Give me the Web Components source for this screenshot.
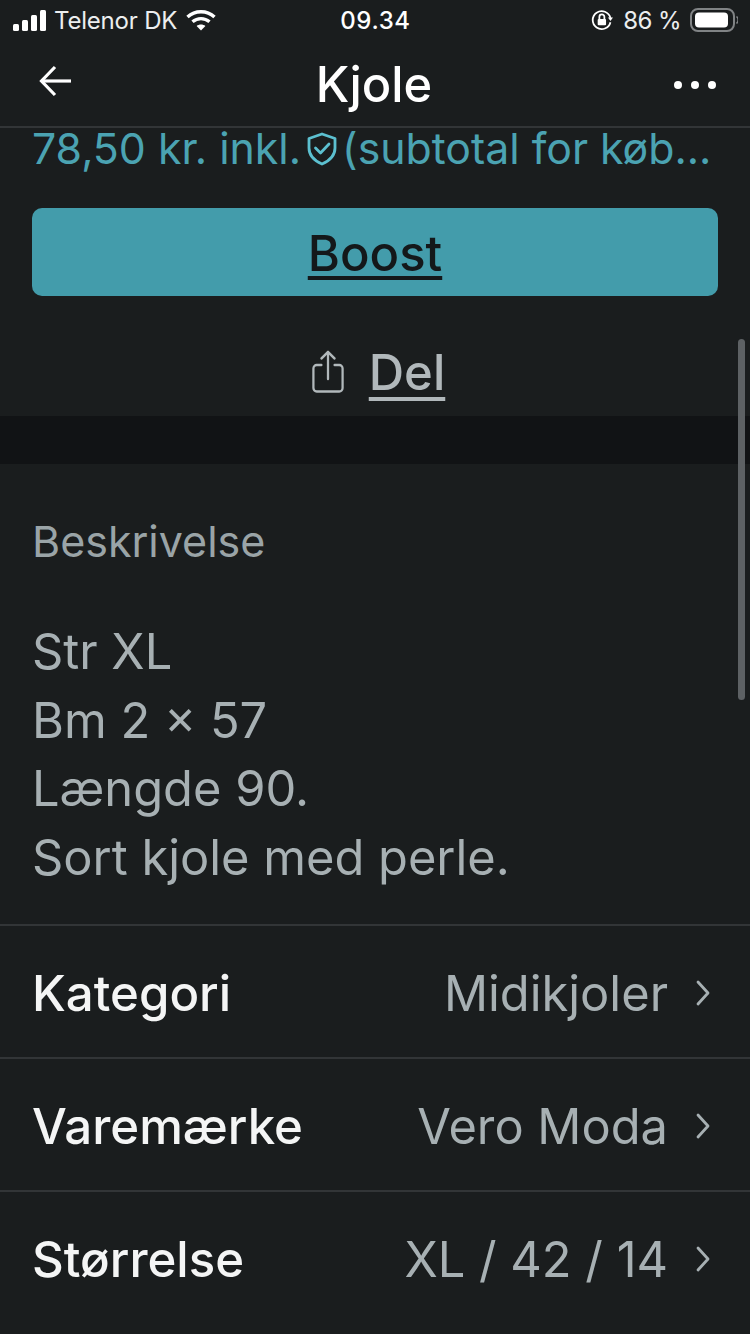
<!DOCTYPE html>
<html lang="da">
<head>
<meta charset="utf-8">
<title>Kjole</title>
<style>
  html, body { margin: 0; padding: 0; background: #1a1d1e; }
  body { width: 750px; height: 1334px; overflow: hidden; position: relative; font-family: Inter, "Liberation Sans", sans-serif; }
</style>
</head>
<body>
<status-bar></status-bar>
<nav-bar title="Kjole"></nav-bar>
<price-line></price-line>
<boost-button>Boost</boost-button>
<share-link>Del</share-link>
<section-gap></section-gap>
<item-description heading="Beskrivelse">
  <div>Str XL</div>
  <div>Bm 2 × 57</div>
  <div>Længde 90.</div>
  <div>Sort kjole med perle.</div>
</item-description>
<attr-row label="Kategori" value="Midikjoler"></attr-row>
<attr-row label="Varemærke" value="Vero Moda"></attr-row>
<attr-row label="Størrelse" value="XL / 42 / 14"></attr-row>
<scroll-thumb></scroll-thumb>

<script>
class StatusBar extends HTMLElement {
  connectedCallback() {
    this.attachShadow({ mode: 'open' });
    this.shadowRoot.innerHTML = `
      <style>
        :host { display: grid; grid-template-columns: 1fr auto 1fr; align-items: center; height: 40px; padding: 0 12px 0 13px; color: #fff; font-size: 24px; }
        .left, .right { display: flex; align-items: center; }
        .right { justify-content: flex-end; }
        .carrier { margin: 0 9px 0 8px; color: #eceeef; letter-spacing: -0.2px; }
        .time { letter-spacing: 0.6px; font-weight: 500; }
        .pct { margin: 0 9px 0 9px; color: #eceeef; letter-spacing: -0.6px; }
      </style>
      <div class="left">
        <svg width="33" height="21" viewBox="0 0 33 21" fill="#fff">
          <rect x="0" y="14" width="6" height="7" rx="1.5"/>
          <rect x="9" y="10" width="6" height="11" rx="1.5"/>
          <rect x="18" y="5" width="6" height="16" rx="1.5"/>
          <rect x="27" y="0" width="6" height="21" rx="1.5"/>
        </svg>
        <span class="carrier">Telenor DK</span>
        <svg width="30" height="22" viewBox="0 0 30 22" fill="none" stroke="#fff" stroke-width="3.4">
          <path d="M1.5 8 C9 1 21 1 28.5 8"/>
          <path d="M6.5 12.8 C11.5 8.5 18.5 8.5 23.5 12.8"/>
          <path d="M15 21.5 L10.6 17 C13 15 17 15 19.4 17 Z" fill="#fff" stroke="none"/>
        </svg>
      </div>
      <div class="time">09.34</div>
      <div class="right">
        <svg width="23" height="22" viewBox="0 0 22 21" fill="none" stroke="#fff" stroke-width="1.7">
          <path d="M18.6 8.6 A8.6 8.6 0 1 0 18.6 12.6"/>
          <path d="M16.2 8 L21 8 L18.6 11.4 Z" fill="#fff" stroke="none"/>
          <rect x="6.4" y="9.6" width="8" height="6" rx="1" fill="#fff" stroke="none"/>
          <path d="M8 10 V7.6 a2.4 2.4 0 0 1 4.8 0 V10"/>
        </svg>
        <span class="pct">86 %</span>
        <svg width="48" height="24" viewBox="0 0 48 24" fill="none">
          <rect x="1" y="1" width="43" height="22" rx="7" stroke="#808385" stroke-width="2"/>
          <rect x="5" y="4.5" width="33" height="15" rx="4" fill="#fff"/>
          <path d="M46.5 8.5 a4.5 4.5 0 0 1 0 7" stroke="#808385" stroke-width="1.6"/>
        </svg>
      </div>`;
  }
}
customElements.define('status-bar', StatusBar);

class NavBar extends HTMLElement {
  connectedCallback() {
    this.attachShadow({ mode: 'open' });
    this.shadowRoot.innerHTML = `
      <style>
        :host { display: flex; align-items: center; justify-content: space-between; height: 86px; padding: 0 34px 0 38px; border-bottom: 2px solid #323537; color: #fff; }
        h1 { margin: 0; font-size: 48.8px; font-weight: 500; line-height: 1; position: relative; top: 2px; }
        .more { display: flex; gap: 9px; position: relative; top: 2px; }
        .more i { width: 8px; height: 8px; border-radius: 50%; background: #fff; }
      </style>
      <svg width="36" height="36" viewBox="0 0 36 36" fill="none" stroke="#fff" stroke-width="3.2" style="position:relative;top:-2px">
        <path d="M33 18 H4"/><path d="M17 4 L3.5 18 L17 32"/>
      </svg>
      <h1>${this.getAttribute('title')}</h1>
      <div class="more"><i></i><i></i><i></i></div>`;
  }
}
customElements.define('nav-bar', NavBar);

class PriceLine extends HTMLElement {
  connectedCallback() {
    this.attachShadow({ mode: 'open' });
    this.shadowRoot.innerHTML = `
      <style>
        :host { display: flex; align-items: center; height: 42px; padding: 0 0 2px 32px; color: #4ba3b2; font-size: 42.8px; line-height: 44px; white-space: nowrap; }
        svg { flex: none; margin: 0 5px 0 6px; }
      </style>
      <span>78,50 kr. inkl.</span>
      <svg width="30" height="34" viewBox="0 0 30 34" fill="none" stroke="#5cc0d0" stroke-width="2.8" stroke-linejoin="round" stroke-linecap="round">
        <path d="M15 2 L28 6.5 V16 C28 24 22 29 15 32 C8 29 2 24 2 16 V6.5 Z"/>
        <path d="M8.5 16 L13.5 21 L22 12"/>
      </svg>
      <span>(subtotal for køb...</span>`;
  }
}
customElements.define('price-line', PriceLine);

class BoostButton extends HTMLElement {
  connectedCallback() {
    this.attachShadow({ mode: 'open' });
    this.shadowRoot.innerHTML = `
      <style>
        :host { display: flex; align-items: center; justify-content: center; box-sizing: border-box; height: 88px; padding-top: 2px; margin: 36px 32px 0; border-radius: 10px; background: #439cab; color: #14181a; font-size: 49px; font-weight: 500; }
        span { text-decoration: underline; text-decoration-thickness: 4px; text-underline-offset: 5px; }
      </style>
      <span><slot></slot></span>`;
  }
}
customElements.define('boost-button', BoostButton);

class ShareLink extends HTMLElement {
  connectedCallback() {
    this.attachShadow({ mode: 'open' });
    this.shadowRoot.innerHTML = `
      <style>
        :host { display: flex; align-items: center; justify-content: center; gap: 25px; box-sizing: border-box; height: 120px; padding: 32px 0 0 7px; color: #b1b8bb; font-size: 49px; font-weight: 500; }
        span { text-decoration: underline; text-decoration-thickness: 4px; text-underline-offset: 7px; }
      </style>
      <svg width="32" height="44" viewBox="0 0 34 44" preserveAspectRatio="none" fill="none" stroke="#b1b8bb" stroke-width="2.4" stroke-linecap="round" stroke-linejoin="round">
        <path d="M10 15 H5 a3.5 3.5 0 0 0 -3.5 3.5 V38 a3.5 3.5 0 0 0 3.5 3.5 H29 a3.5 3.5 0 0 0 3.5 -3.5 V18.5 a3.5 3.5 0 0 0 -3.5 -3.5 H24"/>
        <path d="M17 29 V2"/><path d="M10 8.5 L17 2 L24 8.5"/>
      </svg>
      <span><slot></slot></span>`;
  }
}
customElements.define('share-link', ShareLink);

class SectionGap extends HTMLElement {
  connectedCallback() {
    this.attachShadow({ mode: 'open' });
    this.shadowRoot.innerHTML = `<style>:host { display: block; height: 48px; background: #111315; }</style>`;
  }
}
customElements.define('section-gap', SectionGap);

class ItemDescription extends HTMLElement {
  connectedCallback() {
    this.attachShadow({ mode: 'open' });
    this.shadowRoot.innerHTML = `
      <style>
        :host { display: block; height: 460px; box-sizing: border-box; padding: 53px 32px 0 32px; color: #a7b0b3; }
        h2 { margin: 0 0 53px; font-size: 43px; line-height: 48px; font-weight: 400; color: #9aa4a7; }
        .body { font-size: 48.8px; line-height: 68.6px; }
      </style>
      <h2>${this.getAttribute('heading')}</h2>
      <div class="body"><slot></slot></div>`;
  }
}
customElements.define('item-description', ItemDescription);

class AttrRow extends HTMLElement {
  connectedCallback() {
    this.attachShadow({ mode: 'open' });
    this.shadowRoot.innerHTML = `
      <style>
        :host { display: flex; align-items: center; box-sizing: border-box; height: 133px; border-top: 2px solid #323537; padding: 3px 40px 0 32px; }
        .label { flex: 1; color: #f4f5f5; font-size: 49.2px; font-weight: 500; }
        .value { color: #a7b0b3; font-size: 48.8px; }
        svg { margin-left: 28px; }
      </style>
      <span class="label">${this.getAttribute('label')}</span>
      <span class="value">${this.getAttribute('value')}</span>
      <svg width="14" height="26" viewBox="0 0 14 26" fill="none" stroke="#a7b0b3" stroke-width="2.8" stroke-linecap="round" stroke-linejoin="round">
        <path d="M2 2 L12 13 L2 24"/>
      </svg>`;
  }
}
customElements.define('attr-row', AttrRow);

class ScrollThumb extends HTMLElement {
  connectedCallback() {
    this.attachShadow({ mode: 'open' });
    this.shadowRoot.innerHTML = `<style>:host { position: absolute; left: 738px; top: 339px; width: 7px; height: 361px; border-radius: 4px; background: #5d6164; }</style>`;
  }
}
customElements.define('scroll-thumb', ScrollThumb);
</script>
</body>
</html>
